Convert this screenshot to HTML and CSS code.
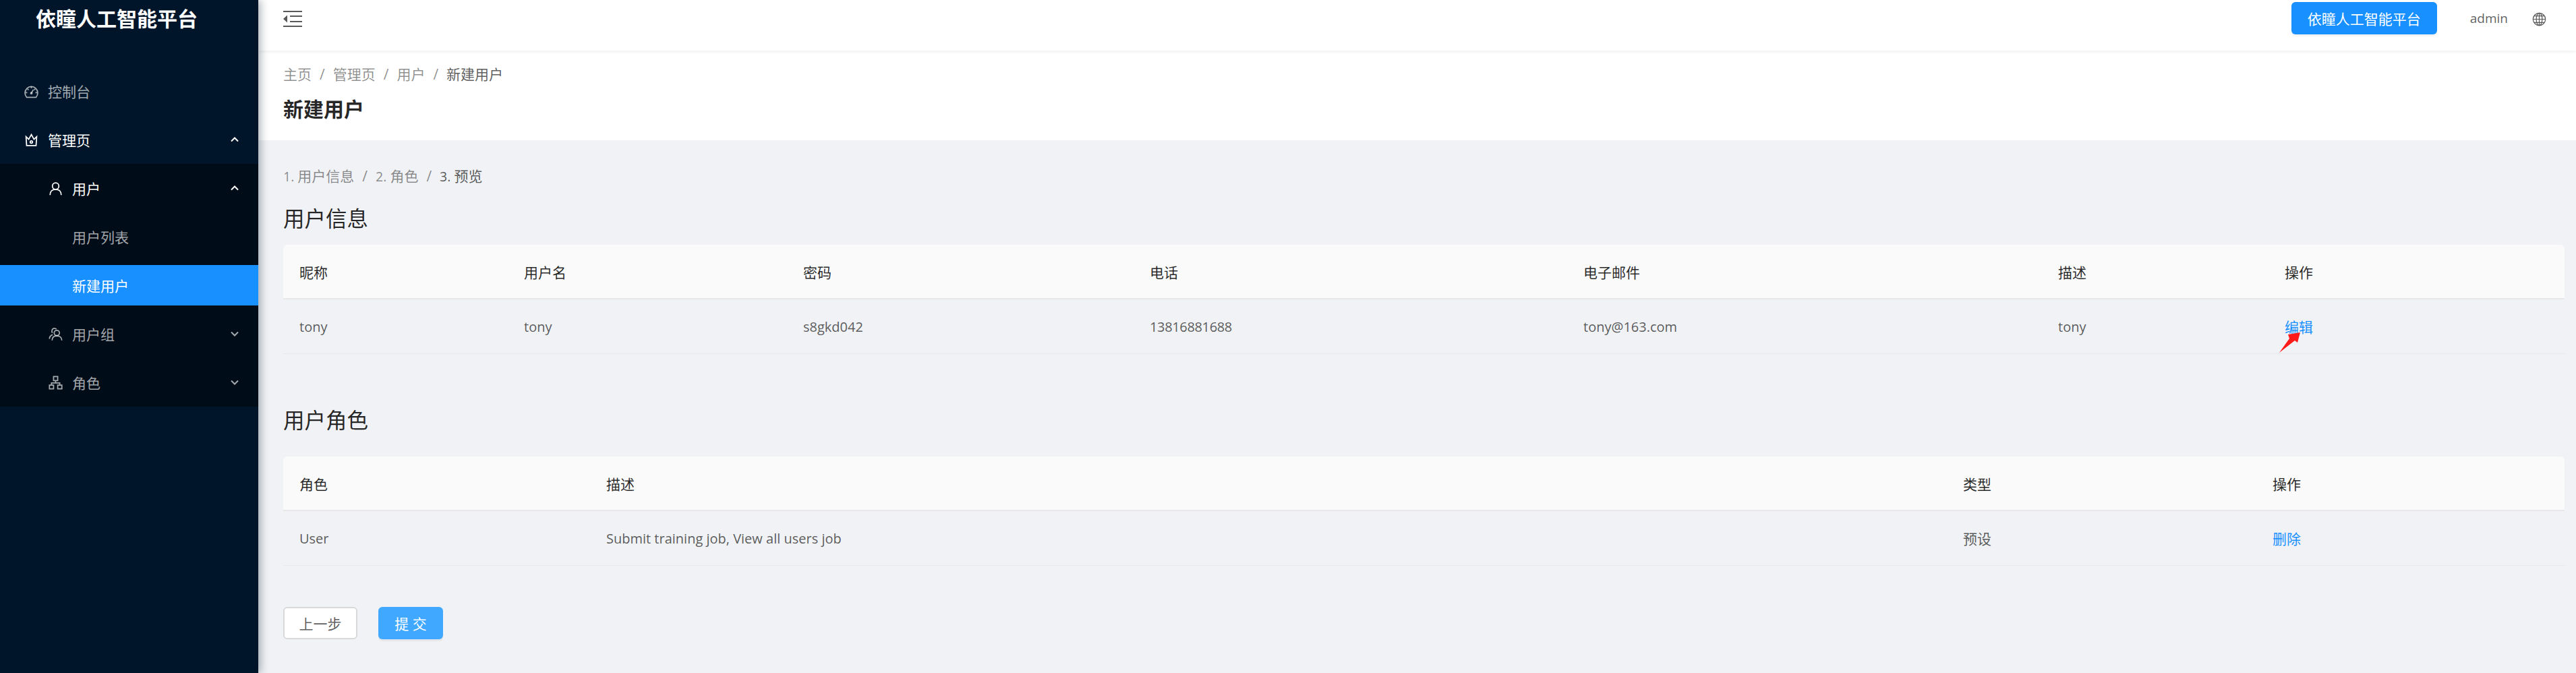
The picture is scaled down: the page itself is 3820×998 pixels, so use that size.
FILE: index.html
```html
<!DOCTYPE html>
<html lang="zh">
<head>
    <meta charset="UTF-8">
    <title>新建用户</title>
    <link rel="stylesheet" href="styles.css">
</head>
<body>
    <div class="layout">
        <aside class="sider">
            <div class="logo">依瞳人工智能平台</div>
            <nav class="menu">
                <div class="item muted">
                    <svg class="icon" viewBox="0 0 24 24"><path d="M4 22 A10.8 10.8 0 1 1 20 22 Z"/><path d="M12 15 L15.5 9 M12 4 V6.5 M5.5 8 L7.3 9.5 M18.5 8 L16.7 9.5 M2.5 14 H5 M19 14 H21.5"/><circle cx="12" cy="15" r="1.2"/></svg>
                    <span>控制台</span>
                </div>
                <div class="item">
                    <svg class="icon" viewBox="0 0 24 24"><path d="M3 6.5 L7.5 11 L12 3 L16.5 11 L21 6.5 L20 21.5 H4 Z"/><circle cx="12" cy="15.5" r="2"/></svg>
                    <span>管理页</span>
                    <svg class="arrow" viewBox="0 0 12 8"><path d="M1 6.5 L6 1.5 L11 6.5"/></svg>
                </div>
                <div class="submenu">
                    <div class="item sub">
                        <svg class="icon" viewBox="0 0 24 24"><circle cx="12" cy="8" r="5.5"/><path d="M2.5 23 C2.5 17 6.5 13.5 12 13.5 S21.5 17 21.5 23"/></svg>
                        <span>用户</span>
                        <svg class="arrow" viewBox="0 0 12 8"><path d="M1 6.5 L6 1.5 L11 6.5"/></svg>
                    </div>
                    <div class="item sub muted">
                        <span class="no-icon">用户列表</span>
                    </div>
                    <div class="item sub active">
                        <span class="no-icon">新建用户</span>
                    </div>
                    <div class="item sub muted">
                        <svg class="icon" viewBox="0 0 24 24"><circle cx="14" cy="10" r="4.5"/><path d="M6 22.5 C6 17.5 9.5 15 14 15 S22.5 17.5 22.5 22.5"/><path d="M6.5 10 C4.5 7 6 2 10 2 C11.5 2 12.5 2.6 13.5 3.5 M7 13 C4 14 1.5 16.5 1.5 20"/></svg>
                        <span>用户组</span>
                        <svg class="arrow" viewBox="0 0 12 8"><path d="M1 1.5 L6 6.5 L11 1.5"/></svg>
                    </div>
                    <div class="item sub muted">
                        <svg class="icon" viewBox="0 0 24 24"><path d="M8.5 1.5 H15.5 V8.5 H8.5 Z M1.5 16 H8.5 V22.5 H1.5 Z M15.5 16 H22.5 V22.5 H15.5 Z M12 8.5 V12.5 M5 16 V12.5 H19 V16"/></svg>
                        <span>角色</span>
                        <svg class="arrow" viewBox="0 0 12 8"><path d="M1 1.5 L6 6.5 L11 1.5"/></svg>
                    </div>
                </div>
            </nav>
        </aside>
        <div class="main">
            <header class="topbar">
                <svg class="fold" viewBox="0 0 28 24"><path d="M0 0 H28 V2 H0 Z M10 7 H28 V9 H10 Z M10 15 H28 V17 H10 Z M0 22 H28 V24 H0 Z M6 6.5 V17.5 L0 12 Z"/></svg>
                <button class="btn-platform">依瞳人工智能平台</button>
                <span class="username">admin</span>
                <svg class="globe" viewBox="0 0 24 24"><circle cx="12" cy="12" r="10.5"/><ellipse cx="12" cy="12" rx="5" ry="10.5"/><path d="M12 1.5 V22.5 M1.5 12 H22.5 M3 6.5 H21 M3 17.5 H21"/></svg>
            </header>
            <div class="page-header">
                <div class="crumbs">
                    <span>主页</span><i>/</i><span>管理页</span><i>/</i><span>用户</span><i>/</i><span class="current">新建用户</span>
                </div>
                <h1>新建用户</h1>
            </div>
            <main class="content">
                <div class="crumbs steps">
                    <span><span class="num">1. </span>用户信息</span><i>/</i><span><span class="num">2. </span>角色</span><i>/</i><span class="current"><span class="num">3. </span>预览</span>
                </div>

                <h2>用户信息</h2>
                <table class="info-table">
                    <colgroup>
                        <col class="c-nick"><col class="c-name"><col class="c-pass"><col class="c-phone"><col class="c-mail"><col class="c-desc"><col>
                    </colgroup>
                    <thead>
                        <tr><th>昵称</th><th>用户名</th><th>密码</th><th>电话</th><th>电子邮件</th><th>描述</th><th>操作</th></tr>
                    </thead>
                    <tbody>
                        <tr>
                            <td class="latin">tony</td><td class="latin">tony</td><td class="latin">s8gkd042</td><td class="latin phone">13816881688</td><td class="latin">tony@163.com</td><td class="latin">tony</td>
                            <td>
                                <a class="link marked">编辑
                                    <svg class="red-arrow" viewBox="0 0 32 32"><path d="M0 32 L15 11 L13 5 L31 2 L27 17 L23 14 Z"/></svg>
                                </a>
                            </td>
                        </tr>
                    </tbody>
                </table>

                <h2 class="second">用户角色</h2>
                <table class="role-table">
                    <colgroup>
                        <col class="c-role"><col class="c-rdesc"><col class="c-type"><col>
                    </colgroup>
                    <thead>
                        <tr><th>角色</th><th>描述</th><th>类型</th><th>操作</th></tr>
                    </thead>
                    <tbody>
                        <tr>
                            <td class="latin">User</td><td class="latin">Submit training job, View all users job</td><td>预设</td><td><a class="link">删除</a></td>
                        </tr>
                    </tbody>
                </table>

                <div class="actions">
                    <button class="btn">上一步</button>
                    <button class="btn primary">提 交</button>
                </div>
            </main>
        </div>
    </div>
</body>
</html>
```

FILE: styles.css
```css
* {
    box-sizing: border-box;
}

body {
    margin: 0;
    font-family: "Open Sans", "Noto Sans CJK SC", sans-serif;
    font-size: 21px;
    color: rgba(0, 0, 0, 0.65);
    background: #f0f2f5;
}

.layout {
    display: flex;
    height: 998px;
    overflow: hidden;
}

/* Sidebar */
.sider {
    position: relative;
    z-index: 2;
    flex: 0 0 383px;
    background: #001529;
    box-shadow: 3px 0 12px rgba(0, 21, 41, 0.35);
    color: #fff;
}

.logo {
    height: 56px;
    padding-left: 53px;
    line-height: 56px;
    font-size: 30px;
    font-weight: 700;
}

.menu {
    display: flex;
    flex-direction: column;
    padding-top: 43px;
}

.submenu {
    display: flex;
    flex-direction: column;
    background: #000c17;
}

.item {
    display: flex;
    align-items: center;
    flex: 0 0 60px;
    margin: 6px 0;
    padding-left: 36px;
    padding-right: 29px;
}

.item.sub {
    padding-left: 72px;
}

.item.muted {
    color: rgba(255, 255, 255, 0.65);
}

.item.active {
    background: #1890ff;
}

.no-icon {
    margin-left: 35px;
}

.icon {
    width: 21px;
    height: 21px;
    margin-right: 14px;
    fill: none;
    stroke: currentColor;
    stroke-width: 2;
}

.arrow {
    width: 12px;
    height: 8px;
    margin-left: auto;
    fill: none;
    stroke: currentColor;
    stroke-width: 2;
}

/* Header */
.main {
    flex: 1;
    min-width: 0;
    display: flex;
    flex-direction: column;
}

.topbar {
    position: relative;
    display: flex;
    align-items: flex-start;
    height: 75px;
    padding: 3px 44px 0 37px;
    background: #fff;
    box-shadow: 0 1px 6px rgba(0, 21, 41, 0.08);
}

.fold {
    width: 28px;
    height: 24px;
    margin-top: 13px;
    margin-right: auto;
    fill: #595959;
}

.btn-platform {
    width: 216px;
    height: 48px;
    border: 0;
    border-radius: 6px;
    background: #1890ff;
    box-shadow: 0 3px 0 rgba(0, 0, 0, 0.045);
    color: #fff;
    font: inherit;
}

.username {
    margin-left: 49px;
    font-size: 19px;
    line-height: 48px;
}

.globe {
    width: 21px;
    height: 21px;
    margin-top: 15px;
    margin-left: 36px;
    fill: none;
    stroke: #595959;
    stroke-width: 1.4;
}

/* Page title */
.page-header {
    height: 133px;
    padding: 19px 37px 0;
    background: #fff;
}

.crumbs {
    line-height: 32px;
    color: rgba(0, 0, 0, 0.45);
}

.crumbs i {
    margin: 0 12px;
    font-style: normal;
}

.crumbs .current {
    color: rgba(0, 0, 0, 0.65);
}

.crumbs .num {
    font-size: 19.5px;
}

h1 {
    margin: 16px 0 0;
    font-size: 30px;
    line-height: 40px;
    font-weight: 700;
    color: rgba(0, 0, 0, 0.85);
}

/* Content */
.content {
    flex: 1;
    padding: 37px 17px 0 37px;
}

h2 {
    margin: 22px 0 16px;
    font-size: 31.5px;
    line-height: 47px;
    font-weight: 400;
    color: rgba(0, 0, 0, 0.85);
}

h2.second {
    margin-top: 74px;
    margin-bottom: 31px;
}

table {
    width: 100%;
    table-layout: fixed;
    border-collapse: separate;
    border-spacing: 0;
}

th,
td {
    height: 81px;
    padding: 0 24px;
    border-bottom: 2px solid #e8e8e8;
    text-align: left;
    font-weight: 400;
}

th {
    background: #fafafa;
    color: rgba(0, 0, 0, 0.85);
}

td {
    border-bottom-width: 1px;
}

td.latin {
    font-size: 20px;
}

td.phone {
    letter-spacing: -0.35px;
}

th:first-child {
    border-top-left-radius: 6px;
}

th:last-child {
    border-top-right-radius: 6px;
}

.c-nick { width: 333px; }
.c-name { width: 414px; }
.c-pass { width: 514px; }
.c-phone { width: 643px; }
.c-mail { width: 704px; }
.c-desc { width: 336px; }

.c-role { width: 455px; }
.c-rdesc { width: 2012px; }
.c-type { width: 459px; }

.link {
    color: #1890ff;
}

.marked {
    position: relative;
    display: inline-block;
}

.red-arrow {
    position: absolute;
    left: -8px;
    top: 22px;
    width: 32px;
    height: 32px;
    fill: #ff1a1a;
}

/* Buttons */
.actions {
    display: flex;
    gap: 31px;
    margin-top: 61px;
}

.btn {
    width: 110px;
    height: 48px;
    border: 2px solid #d9d9d9;
    border-radius: 6px;
    background: #fff;
    color: rgba(0, 0, 0, 0.65);
    font: inherit;
}

.btn.primary {
    width: 96px;
    border: 0;
    background: #40a9ff;
    box-shadow: 0 3px 0 rgba(0, 0, 0, 0.045);
    color: #fff;
}
```
